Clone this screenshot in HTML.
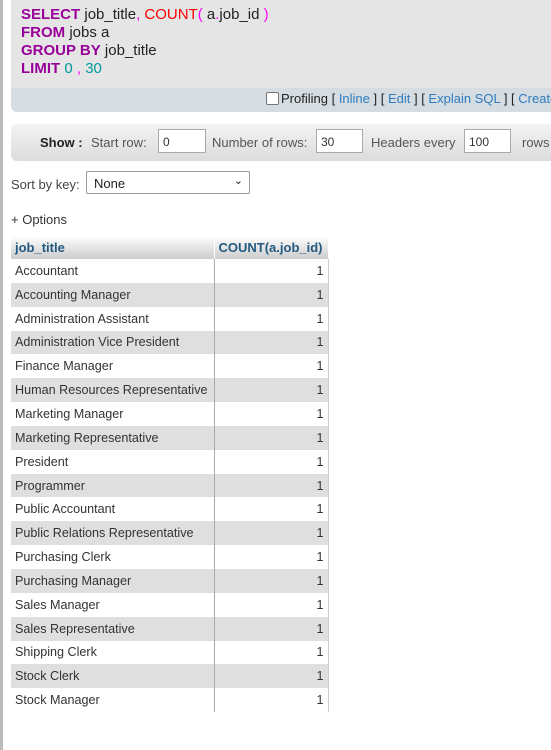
<!DOCTYPE html>
<html><head><style>
html,body{margin:0;width:551px;height:750px;overflow:hidden}
body{background:#fff;font-family:"Liberation Sans",sans-serif;font-size:13px;color:#444;position:relative}
.lb{position:absolute;left:0;top:0;width:3px;height:750px;background:#bbb}
.sql{position:absolute;left:11px;top:0;width:540px;height:88px;background:#e5e5e5;}
.code{position:absolute;left:10px;top:6px;font-size:15px;line-height:18px;color:#222}
.k{color:#909;font-weight:bold}
.f{color:#f00}.p{color:#f0f}.n{color:#099}
.prof{position:absolute;left:11px;top:88px;width:540px;height:24px;background:#d5dde3;border-radius:0 0 0 6px;font-size:13px;overflow:hidden}
.prof span.t{position:absolute;left:255px;top:3px;white-space:nowrap;color:#222}
.prof a{color:#2e7bbf}
.cb{display:inline-block;width:11px;height:11px;border:1px solid #777;background:#fff;border-radius:2px;vertical-align:-2px;margin-right:2px}
.show{position:absolute;left:11px;top:124px;width:540px;height:37px;background:linear-gradient(#f3f3f3,#dcdcdc);border-radius:6px 0 0 6px;white-space:nowrap;color:#555;overflow:hidden}
.show span{position:absolute;top:11px}
.in{position:absolute;top:5px;height:24px;border:1px solid #aaa;background:#fff;box-sizing:border-box;padding:5px 4px;font-size:12px;color:#333;width:47px}
.sort{position:absolute;left:11px;top:177px;color:#444}
.sel{position:absolute;left:86px;top:171px;width:164px;height:23px;border:1px solid #999;border-radius:2px;box-sizing:border-box;padding:4px 7px;color:#222}
.opt{position:absolute;left:11px;top:212px;color:#333}
table{position:absolute;left:11px;top:236px;border-collapse:collapse;width:317px;table-layout:fixed}
th{background:linear-gradient(#fff,#ccc);height:23px;color:#235a81;font-weight:bold;text-align:left;padding:0 4px;border-right:1px solid #fff;white-space:nowrap;overflow:hidden}
td{height:23.85px;padding:0 4px;color:#333;border-right:1px solid #aaa;box-sizing:border-box;white-space:nowrap;overflow:hidden;font-size:12.6px}
td:last-child{text-align:right;border-right:1px solid #ccc}
tr:nth-child(odd) td{background:#dfdfdf}
</style></head><body>
<div class="lb"></div>
<div class="sql"><div class="code"><span class="k">SELECT</span> job_title<span class="p">,</span> <span class="f">COUNT</span><span class="p">(</span> a<span class="p">.</span>job_id <span class="p">)</span><br><span class="k">FROM</span> jobs a<br><span class="k">GROUP BY</span> job_title<br><span class="k">LIMIT</span> <span class="n">0</span> <span class="p">,</span> <span class="n">30</span></div></div>
<div class="prof"><span class="t"><span class="cb"></span>Profiling [ <a>Inline</a> ] [ <a>Edit</a> ] [ <a>Explain SQL</a> ] [ <a>Create PHP code</a> ]</span></div>
<div class="show"><span style="left:29px;color:#222"><b>Show :</b></span><span style="left:80px">Start row:</span><div class="in" style="left:147px;width:48px">0</div><span style="left:201px">Number of rows:</span><div class="in" style="left:305px">30</div><span style="left:360px">Headers every</span><div class="in" style="left:453px">100</div><span style="left:511px">rows</span></div>
<div class="sort">Sort by key:</div>
<div class="sel">None<span style="position:absolute;right:6px;top:2px;font-size:11px">&#8964;</span></div>
<div class="opt">+ Options</div>
<table>
<colgroup><col style="width:203px"><col style="width:114px"></colgroup>
<tr><th>job_title</th><th>COUNT(a.job_id)</th></tr>
<tr><td>Accountant</td><td>1</td></tr>
<tr><td>Accounting Manager</td><td>1</td></tr>
<tr><td>Administration Assistant</td><td>1</td></tr>
<tr><td>Administration Vice President</td><td>1</td></tr>
<tr><td>Finance Manager</td><td>1</td></tr>
<tr><td>Human Resources Representative</td><td>1</td></tr>
<tr><td>Marketing Manager</td><td>1</td></tr>
<tr><td>Marketing Representative</td><td>1</td></tr>
<tr><td>President</td><td>1</td></tr>
<tr><td>Programmer</td><td>1</td></tr>
<tr><td>Public Accountant</td><td>1</td></tr>
<tr><td>Public Relations Representative</td><td>1</td></tr>
<tr><td>Purchasing Clerk</td><td>1</td></tr>
<tr><td>Purchasing Manager</td><td>1</td></tr>
<tr><td>Sales Manager</td><td>1</td></tr>
<tr><td>Sales Representative</td><td>1</td></tr>
<tr><td>Shipping Clerk</td><td>1</td></tr>
<tr><td>Stock Clerk</td><td>1</td></tr>
<tr><td>Stock Manager</td><td>1</td></tr>
</table>
</body></html>
